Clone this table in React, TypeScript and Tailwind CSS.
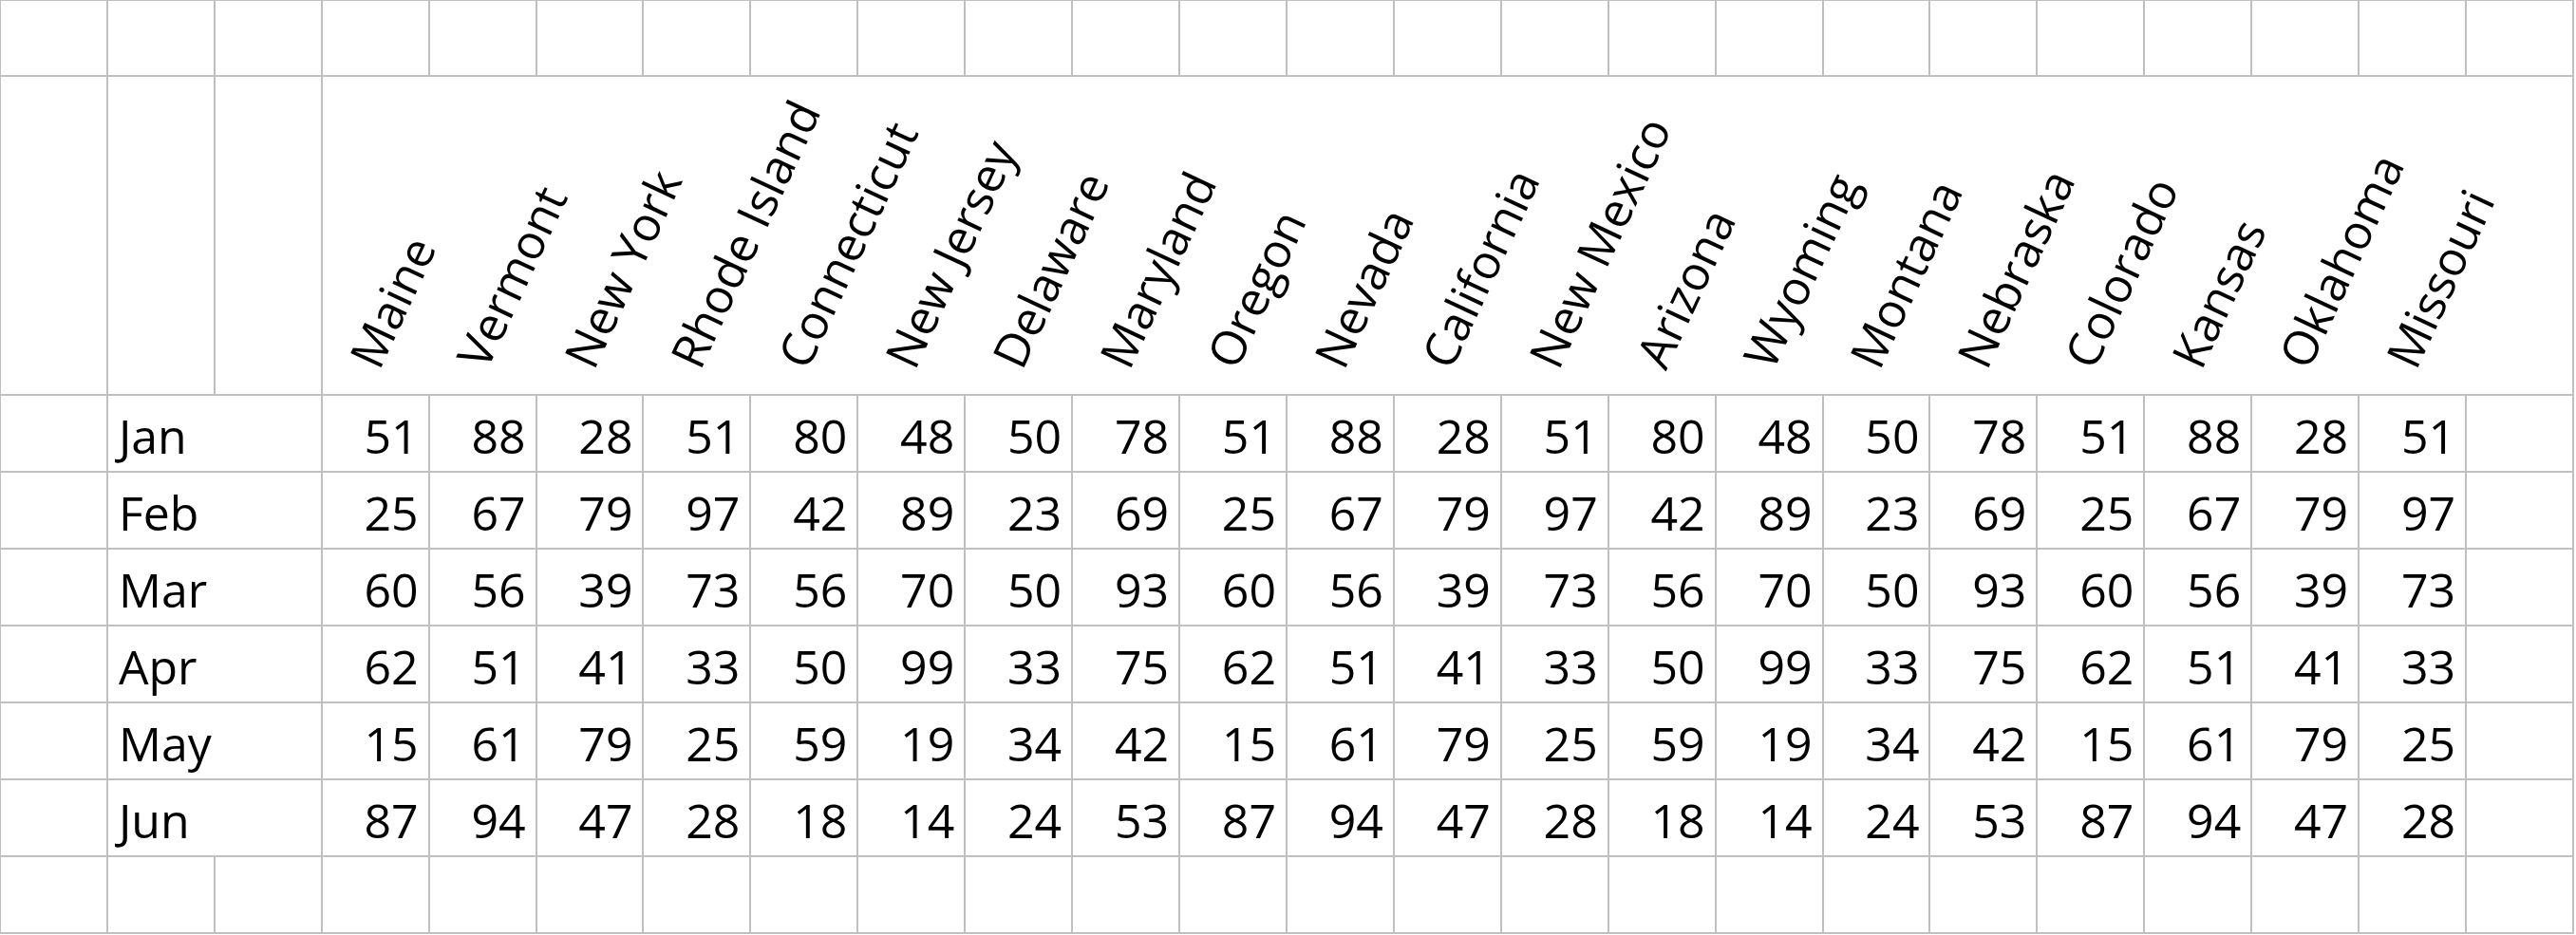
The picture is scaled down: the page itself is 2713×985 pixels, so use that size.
import React from 'react';

const states = [
  'Maine', 'Vermont', 'New York', 'Rhode Island', 'Connecticut', 'New Jersey', 'Delaware',
  'Maryland', 'Oregon', 'Nevada', 'California', 'New Mexico', 'Arizona', 'Wyoming',
  'Montana', 'Nebraska', 'Colorado', 'Kansas', 'Oklahoma', 'Missouri',
];

const rows: [string, number[]][] = [
  ['Jan', [51, 88, 28, 51, 80, 48, 50, 78, 51, 88, 28, 51, 80, 48, 50, 78, 51, 88, 28, 51]],
  ['Feb', [25, 67, 79, 97, 42, 89, 23, 69, 25, 67, 79, 97, 42, 89, 23, 69, 25, 67, 79, 97]],
  ['Mar', [60, 56, 39, 73, 56, 70, 50, 93, 60, 56, 39, 73, 56, 70, 50, 93, 60, 56, 39, 73]],
  ['Apr', [62, 51, 41, 33, 50, 99, 33, 75, 62, 51, 41, 33, 50, 99, 33, 75, 62, 51, 41, 33]],
  ['May', [15, 61, 79, 25, 59, 19, 34, 42, 15, 61, 79, 25, 59, 19, 34, 42, 15, 61, 79, 25]],
  ['Jun', [87, 94, 47, 28, 18, 14, 24, 53, 87, 94, 47, 28, 18, 14, 24, 53, 87, 94, 47, 28]],
];

function EmptyRow() {
  return (
    <>
      {Array.from({ length: 24 }).map((_, i) => (
        <div key={i} className="bg-white" />
      ))}
    </>
  );
}

export default function App() {
  return (
    <div className="min-h-[985px] bg-white font-['Open_Sans',sans-serif] text-[50px] text-black">
      <div className="grid w-[2711px] grid-cols-24 grid-rows-[78px_334px_repeat(7,79px)] gap-[2px] bg-[#c0c0c0] pt-px pr-[2px] pb-[2px] pl-px">
        <EmptyRow />

        {/* header row with slanted state names */}
        <div className="bg-white" />
        <div className="bg-white" />
        <div className="bg-white" />
        <div className="col-span-21 flex items-end bg-white">
          {states.map((s) => (
            <div key={s} className="flex w-[112.917px] shrink-0 items-end pb-[21px] pl-[65px]">
              <span className="block shrink-0 origin-bottom-left -rotate-[65deg] whitespace-nowrap leading-none">
                {s}
              </span>
            </div>
          ))}
        </div>

        {rows.map(([month, vals]) => (
          <React.Fragment key={month}>
            <div className="bg-white" />
            <div className="col-span-2 bg-white pt-[3px] pl-[11px] leading-[79px]">{month}</div>
            {vals.map((v, i) => (
              <div key={i} className="bg-white pt-[3px] pr-[10px] text-right leading-[79px]">
                {v}
              </div>
            ))}
            <div className="bg-white" />
          </React.Fragment>
        ))}

        <EmptyRow />
      </div>
    </div>
  );
}
